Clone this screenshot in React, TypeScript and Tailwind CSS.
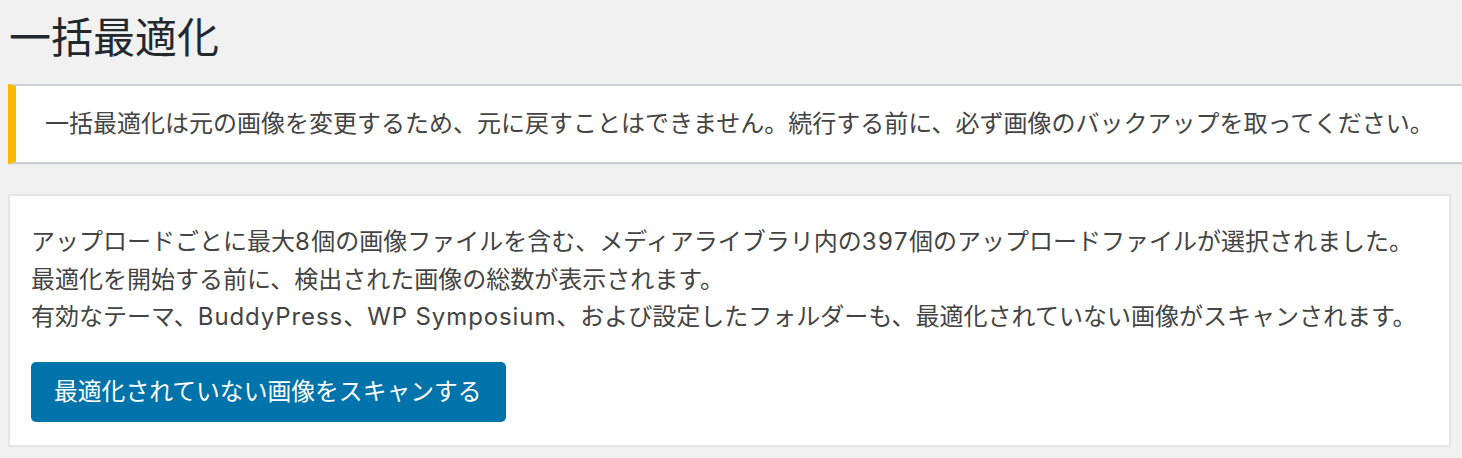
export default function App() {
  return (
    <div
      className="w-[1462px] h-[458px] overflow-hidden bg-[#f1f1f1] pl-[8px] pt-[11px] text-[#444]"
      style={{ fontFamily: 'Inter, "Noto Sans CJK JP", sans-serif' }}
    >
      <h1 className="pl-[1px] text-[42px] leading-[54px] font-normal text-[#23282d]">
        一括最適化
      </h1>

      <div className="mt-[19px] mr-[-20px] flex h-[80px] items-center border-y-2 border-l-[8px] border-[#ccd0d4] border-l-[#ffb900] bg-white pl-[29px] shadow-[0_1px_1px_rgba(0,0,0,0.04)]">
        <p className="text-[24px] leading-[37.5px]">
          一括最適化は元の画像を変更するため、元に戻すことはできません。続行する前に、必ず画像のバックアップを取ってください。
        </p>
      </div>

      <div className="mt-[30px] w-[1443px] border-2 border-[#e5e5e5] bg-white pt-[27px] pb-[23px] pl-[21px]">
        <p className="text-[24px] leading-[37.5px]">
          アップロードごとに最大<span className="tracking-[1.5px]">8</span>個の画像ファイルを含む、メディアライブラリ内の
          <span className="tracking-[1.5px]">397</span>個のアップロードファイルが選択されました。
        </p>
        <p className="text-[24px] leading-[37.5px]">
          最適化を開始する前に、検出された画像の総数が表示されます。
        </p>
        <p className="text-[24px] leading-[37.5px]">
          有効なテーマ、<span className="tracking-[0.9px]">BuddyPress</span>、
          <span className="tracking-[0.9px]">WP Symposium</span>
          、および設定したフォルダーも、最適化されていない画像がスキャンされます。
        </p>
        <button
          type="button"
          className="mt-[26px] flex h-[60px] items-center rounded-[5px] bg-[#0073aa] pl-[23px] pr-[24px] text-[23.8px] text-white"
        >
          最適化されていない画像をスキャンする
        </button>
      </div>
    </div>
  );
}
